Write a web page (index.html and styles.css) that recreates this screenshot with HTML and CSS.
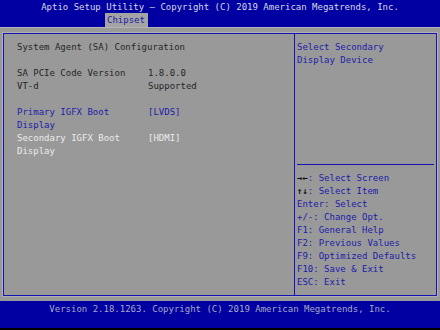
FILE: index.html
```html
<!DOCTYPE html>
<html>
    <head>
        <title>Aptio Setup Utility</title><meta charset="UTF-8">
        <link rel="stylesheet" href="styles.css">
    </head>
    <body>
        <div class="screen">
            <div class="topbar">
                <p class="title">Aptio Setup Utility – Copyright (C) 2019 American Megatrends, Inc.</p>
                <div class="tabs">
                    <span class="tab">Chipset</span>
                </div>
            </div>
            <div class="body">
                <div class="frame">
                    <div class="left">
                        <div class="row heading">System Agent (SA) Configuration</div>
                        <div class="row blank"></div>
                        <div class="row"><span class="label">SA PCIe Code Version</span><span class="value">1.8.0.0</span></div>
                        <div class="row"><span class="label">VT-d</span><span class="value">Supported</span></div>
                        <div class="row blank"></div>
                        <div class="row item"><span class="label">Primary IGFX Boot<br>Display</span><span class="value">[LVDS]</span></div>
                        <div class="row selected"><span class="label">Secondary IGFX Boot<br>Display</span><span class="value">[HDMI]</span></div>
                    </div>
                    <div class="right">
                        <div class="help">Select Secondary<br>Display Device</div>
                        <div class="sep"></div>
                        <ul class="keys">
                            <li><b>→←</b>: Select Screen</li>
                            <li><b>↑↓</b>: Select Item</li>
                            <li>Enter: Select</li>
                            <li>+/-: Change Opt.</li>
                            <li>F1: General Help</li>
                            <li>F2: Previous Values</li>
                            <li>F9: Optimized Defaults</li>
                            <li>F10: Save &amp; Exit</li>
                            <li>ESC: Exit</li>
                        </ul>
                    </div>
                </div>
            </div>
            <div class="footer">Version 2.18.1263. Copyright (C) 2019 American Megatrends, Inc.</div>
        </div>
    </body>
</html>
```

FILE: styles.css
```css
*{margin: 0; padding: 0; box-sizing: border-box;}
body{background: #000; font-family: "DejaVu Sans Mono", "Liberation Mono", monospace; font-size: 9px; line-height: 13px;}
.screen{width: 440px; height: 330px; display: flex; flex-direction: column;}

/* top bar */
.topbar{height: 27px; background: #0000a2; display: flex; flex-direction: column;}
.topbar .title{height: 13px; padding-top: 1px; text-align: center; color: #d8d8e0; white-space: pre;}
.tabs{display: flex; padding-left: 105px; flex: 1; align-items: flex-end;}
.tab{height: 14px; line-height: 14px; padding: 0 3px 0 2px; background: #a4a4a4; color: #1a1aa6;}

/* main area */
.body{height: 274px; background: #999; border-top: 1px solid #b4b4b4; padding: 5px 3px 5px 3px;}
.frame{height: 263px; border: 1px solid #1414b4; box-shadow: 0 0 0 1px #b0b0b0; display: flex;}
.left{width: 291px; border-right: 1px solid #1414b4; padding: 7px 0 0 13px; color: #262626;}
.row{display: flex; min-height: 13px;}
.row.heading{white-space: pre;}
.row .label{width: 131px;}
.row .value{white-space: pre;}
.row.item{color: #1c1caa;}
.row.selected{color: #ececec;}

.right{flex: 1; display: flex; flex-direction: column; padding: 7px 0 6px 0; color: #1c1caa;}
.help{flex: 1; padding-left: 2px;}
.sep{height: 1px; background: #1414b4; margin: 0 2px 7px 2px;}
.keys{list-style: none; padding-left: 2px;}
.keys b{color: #101010;}

/* footer */
.footer{height: 27px; background: #0000a2; color: #a8a8c4; text-align: center; padding-top: 2px; white-space: pre;}
```
